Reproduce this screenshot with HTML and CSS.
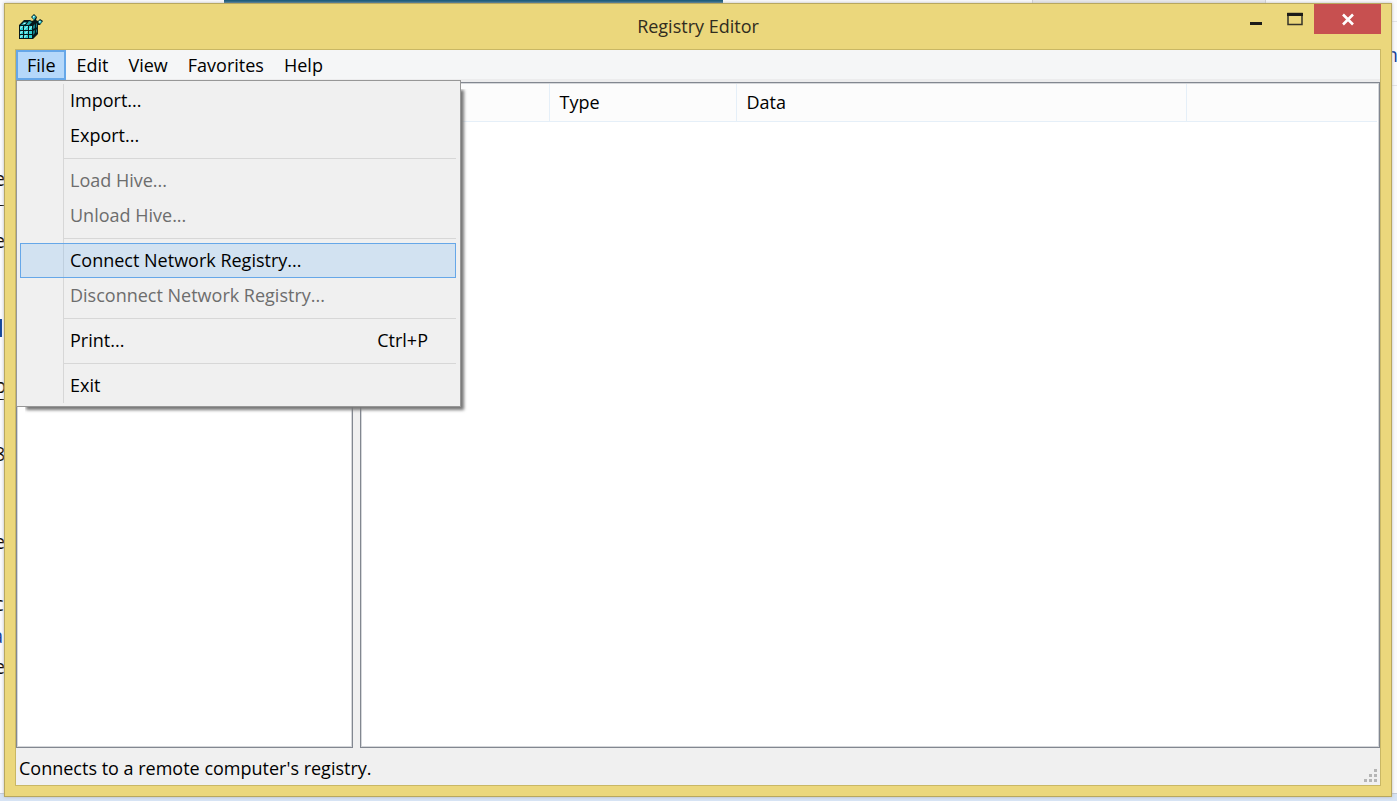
FILE: index.html
```html
<!DOCTYPE html>
<html lang="en">
<head>
<meta charset="utf-8">
<title>Registry Editor</title>
<link rel="stylesheet" href="styles.css">
</head>
<body>
<div class="backdrop">
  <div class="banner"></div>
  <div class="side-tab"></div>
  <span class="scrap scrap-1">e</span>
  <span class="scrap-line line-1"></span>
  <span class="scrap scrap-2">e</span>
  <span class="scrap-link"></span>
  <span class="scrap scrap-3">p</span>
  <span class="scrap-line line-2"></span>
  <span class="scrap scrap-4">8</span>
  <span class="scrap scrap-5">e</span>
  <span class="scrap scrap-6">c</span>
  <span class="scrap scrap-7 blue">a</span>
  <span class="scrap scrap-8">e</span>
  <span class="scrap scrap-right">n</span>
  <div class="rules"></div>
  <div class="taskbar"></div>
</div>
<main class="window">
  <header class="titlebar">
    <svg class="app-icon" viewBox="0 0 26 26" aria-hidden="true">
      <path d="M1 11 6 6 12 6 14 7 16 6 13 3 16 0 19 3 18 6 20 7 22 5 25 7 22 11 20 11 20 20 15 25H1Z" fill="#06191b"/>
      <path d="M3 11 6 8h3l-3 3zM8 11l3-4 3 1-3 3z" fill="#1fa6ac"/>
      <path d="M2 12h3v4H2zM6 12h4v4H6zM11 12h3v4h-3zM2 17h3v3H2zM6 17h4v3H6zM11 17h3v3h-3zM2 21h3v3H2zM6 21h4v3H6zM11 21h3v3h-3z" fill="#2fcfd2"/>
      <path d="M15 12l2-2v4l-2 1zM18 10l1-1v4l-1 1zM15 17l2-1v3l-2 2zM18 16l1-1v3l-1 1z" fill="#147c82"/>
      <path d="M16 1l2 2-2 3-2-3zM22 6l2 2-2 2-2-2z" fill="#31bdc2"/>
      <path d="M2 14l2-2h1l-3 3zM6 15l3-3h1l-4 4zM2 19l2-2h1l-3 3zM7 19l2-2h1l-3 3zM11 15l3-3v1l-3 3zM6 23l2-2h1l-3 3zM2 23l2-2h1l-3 3zM6 9h2l-1 1H5zM15 2h2l-2 2zM21 7h2l-2 2z" fill="#c9ffff"/>
    </svg>
    <h1 class="title">Registry Editor</h1>
    <div class="controls">
      <button class="control" aria-label="Minimize"><svg width="14" height="30" viewBox="0 0 14 30"><path d="M1 18h12v3H1z" fill="#1c1b18"/></svg></button>
      <button class="control" aria-label="Maximize"><svg width="16" height="30" viewBox="0 0 16 30"><path d="M1 9.500h14v11H1z" fill="none" stroke="#35332a" stroke-width="1.500"/><path d="M0 9h16v3H0z" fill="#1c1b18"/></svg></button>
      <button class="control close" aria-label="Close"><svg width="14" height="30" viewBox="0 0 14 30"><path d="M2 10.500 12 20.500M12 10.500 2 20.500" fill="none" stroke="#fff" stroke-width="2.600"/></svg></button>
    </div>
  </header>
  <div class="client">
    <nav class="menubar">
      <div class="menu-holder">
        <button class="menu-button active" aria-expanded="true">File</button>
        <div class="dropdown" role="menu">
          <button class="item" role="menuitem">Import...</button>
          <button class="item" role="menuitem">Export...</button>
          <hr class="separator">
          <button class="item" role="menuitem" disabled>Load Hive...</button>
          <button class="item" role="menuitem" disabled>Unload Hive...</button>
          <hr class="separator">
          <button class="item selected" role="menuitem">Connect Network Registry...</button>
          <button class="item" role="menuitem" disabled>Disconnect Network Registry...</button>
          <hr class="separator">
          <button class="item" role="menuitem"><span>Print...</span><span>Ctrl+P</span></button>
          <hr class="separator">
          <button class="item" role="menuitem">Exit</button>
        </div>
      </div>
      <button class="menu-button">Edit</button>
      <button class="menu-button">View</button>
      <button class="menu-button">Favorites</button>
      <button class="menu-button">Help</button>
    </nav>
    <div class="panes">
      <section class="tree" aria-label="Keys"></section>
      <section class="list" aria-label="Values">
        <table class="values">
          <colgroup><col class="col-name"><col class="col-type"><col class="col-data"><col></colgroup>
          <thead><tr><td></td><th scope="col">Type</th><th scope="col">Data</th><td></td></tr></thead>
        </table>
      </section>
    </div>
    <footer class="status">
      <span>Connects to a remote computer's registry.</span>
      <svg class="grip" width="14" height="14" viewBox="0 0 14 14" aria-hidden="true"><path d="M10 0h3v3h-3zM5 5h3v3H5zM10 5h3v3h-3zM0 10h3v3H0zM5 10h3v3H5zM10 10h3v3h-3z" fill="#b5b5b5"/></svg>
    </footer>
  </div>
</main>
</body>
</html>
```
FILE: styles.css
```css
* { box-sizing: border-box; }
body {
  margin: 0;
  font: 18px/24px "Open Sans", "Noto Sans", sans-serif;
  color: #000;
  background: #fafafc;
}
button { font: inherit; color: inherit; border: 0; margin: 0; padding: 0; background: none; }

/* page lying underneath the window */
.backdrop { position: absolute; inset: 0; overflow: hidden; z-index: -1; }
.banner { position: absolute; left: 224px; top: 0; width: 499px; height: 4px; background: #17587a; }
.side-tab { position: absolute; left: 1032px; top: 0; width: 234px; height: 4px; background: #e9e9eb; border: solid #cfcfd2; border-width: 0 1px; }
.taskbar { position: absolute; inset: auto 0 0; height: 8px; background: #d6e3f4; border-top: 1px solid #c3cad6; }
.rules { position: absolute; right: 0; top: 21px; width: 6px; height: 65px; border: solid #e3e3e6; border-width: 1px 0; }
.scrap { position: absolute; left: -6px; font-size: 20px; }
.scrap-line { position: absolute; left: 0; width: 4px; height: 1px; background: #111; }
.scrap-link { position: absolute; left: 0; top: 319px; width: 2px; height: 18px; background: #14479a; }
.scrap-1 { top: 167px; }
.line-1 { top: 205px; }
.scrap-2 { top: 229px; }
.scrap-3 { top: 374px; }
.line-2 { top: 399px; }
.scrap-4 { top: 442px; }
.scrap-5 { top: 530px; }
.scrap-6 { top: 592px; }
.scrap-7 { top: 624px; left: -8px; }
.scrap-8 { top: 655px; }
.scrap-right { top: 43px; left: auto; right: -1px; }
.blue, .scrap-right { color: #1b3f98; }

.window {
  display: flex;
  flex-direction: column;
  height: calc(100vh - 7px);
  margin: 3px 5px 4px 4px;
  padding: 0 10px 10px;
  background: #ebd77c;
  border: 1px solid #b8a75f;
  box-shadow: 0 0 3px #b9b9b9;
}
.titlebar { display: grid; grid-template-columns: 1fr auto 1fr; height: 45px; }
.app-icon { width: 26px; height: 26px; margin: 10px 0 0 3px; }
.title { margin: 10px 0 0; font-size: 18px; line-height: 24px; font-weight: 400; color: #302c20; }
.controls { display: flex; justify-content: flex-end; align-items: flex-start; }
.control { display: flex; justify-content: center; width: 39px; height: 30px; }
.control svg { display: block; }
.close { width: 67px; background: #c75050; }

.client { flex: 1; display: flex; flex-direction: column; border: 1px solid #c9b764; background: #f0f0f0; }
.menubar { display: flex; height: 32px; background: #f5f6f7; border-bottom: 3px solid #ececed; }
.menu-button { height: 30px; padding: 0 8px 0 10px; border: 1px solid transparent; line-height: 28px; }
.menu-button.active { background: #b5d8fa; border: 2px solid #66a7e8; padding: 0 8px 0 9px; line-height: 26px; }
.menu-holder { position: relative; }
.dropdown {
  position: absolute;
  z-index: 1;
  left: 0;
  top: 30px;
  width: 445px;
  padding: 2px 4px 3px 3px;
  border: 1px solid #979797;
  background: linear-gradient(#d7d7d7, #d7d7d7) 46px 3px / 1px calc(100% - 6px) no-repeat #f0f0f0;
}
.dropdown::after {
  content: "";
  position: absolute;
  z-index: -1;
  inset: 8px -1px -1px 8px;
  box-shadow: 2px 2px 3px 1px #777;
  clip-path: polygon(100% 0, calc(100% + 8px) 0, calc(100% + 8px) calc(100% + 8px), 0 calc(100% + 8px), 0 100%, 100% 100%);
}
.item {
  display: flex;
  justify-content: space-between;
  align-items: center;
  width: 100%;
  height: 35px;
  padding: 0 27px 2px 49px;
  border: 1px solid transparent;
  white-space: nowrap;
}
.item:disabled { color: #6d6d6d; }
.item.selected { background: #78b8f340; border-color: #66a7e8; }
.separator { height: 1px; margin: 5px 0 4px 43px; border: 0; background: #d7d7d7; }

.panes { flex: 1; display: flex; gap: 7px; }
.tree, .list { background: #fff; border: 1px solid #828790; outline: 1px solid #d5d7da; outline-offset: -2px; }
.tree { width: 337px; }
.list { flex: 1; padding: 1px 2px; }
.values { width: 100%; table-layout: fixed; border-collapse: collapse; }
.values th, .values td { height: 37px; padding: 0 0 0 10px; text-align: left; font-weight: 400; background: #fcfcfc; border-bottom: 1px solid #e5eff8; border-right: 1px solid #e5eff8; }
.values td:last-child { border-right: 0; }
.col-name { width: 186px; }
.col-type { width: 187px; }
.col-data { width: 450px; }
.status { display: flex; justify-content: space-between; height: 37px; padding: 8px 2px 2px 3px; }
.grip { align-self: flex-end; }
```
